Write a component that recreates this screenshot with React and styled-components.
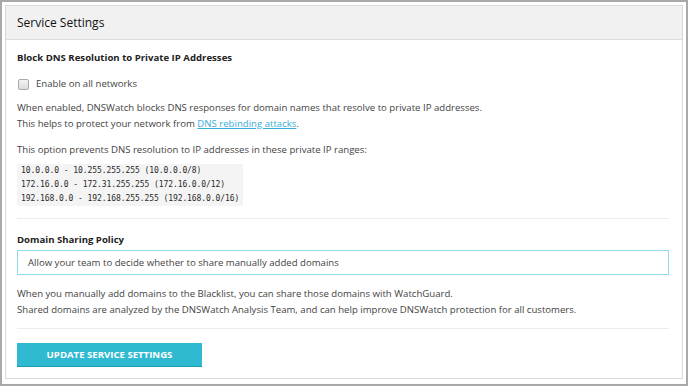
import React from 'react'
import styled, { createGlobalStyle } from 'styled-components'

const GlobalStyle = createGlobalStyle`
  html, body { margin: 0; padding: 0; background: #fff; }
  body { font-family: "Open Sans", "Liberation Sans", sans-serif; color: #333; }
`

const Frame = styled.div`
  width: 688px;
  height: 386px;
  box-sizing: border-box;
  border: 2px solid #a9a9a9;
  padding: 3px 3px 5px 3px;
`

const Panel = styled.section`
  height: 100%;
  box-sizing: border-box;
  border: 1px solid #d9d9d9;
  display: flex;
  flex-direction: column;
`

const Header = styled.header`
  height: 33px;
  background: #f1f1f1;
  border-bottom: 1px solid #dcdcdc;
  display: flex;
  align-items: center;
  padding: 0 11px;
  font-size: 12px;
  color: #111;
`

const Body = styled.div`
  padding: 10px 13px 0 11px;
  font-size: 9.6px;
`

const Title = styled.h3`
  margin: ${p => p.$top || 0}px 0 0;
  font-size: 9.6px;
  font-weight: 700;
  color: #222;
  line-height: 16px;
`

const CheckRow = styled.label`
  display: flex;
  align-items: center;
  gap: 7px;
  margin-top: 10px;
  line-height: 16px;
  color: #444;
`

const Box = styled.span`
  width: 9px;
  height: 9px;
  border: 1px solid #aaa;
  border-radius: 2px;
  background: linear-gradient(#f4f4f4, #dcdcdc);
  margin-left: 1px;
`

const Text = styled.p`
  margin: ${p => p.$top || 0}px 0 0;
  line-height: 16px;
  color: #444;
`

const Link = styled.a`
  color: #3aaed8;
  text-decoration: underline;
`

const Code = styled.pre`
  width: fit-content;
  margin: 6px 0 0;
  padding: 0 4px;
  background: #f4f4f4;
  font-family: "DejaVu Sans Mono", "Liberation Mono", monospace;
  font-size: 8px;
  letter-spacing: -0.07px;
  line-height: 14px;
  color: #2a2a2a;
`

const Divider = styled.hr`
  border: 0;
  border-top: 1px solid #ececec;
  margin: ${p => p.$top}px 0 0;
`

const Select = styled.div`
  margin-top: 2px;
  height: 23px;
  border: 1px solid #8fdbe9;
  display: flex;
  align-items: center;
  padding: 0 10px;
  color: #444;
`

const Button = styled.button`
  margin-top: 14px;
  width: 185px;
  height: 24px;
  border: 0;
  border-bottom: 1px solid #1c9bb1;
  background: #2fbad2;
  color: #fff;
  font-family: "Open Sans", "Liberation Sans", sans-serif;
  font-weight: 700;
  font-size: 9.6px;
  text-transform: uppercase;
`

export default function App() {
  return (
    <Frame>
      <GlobalStyle />
      <Panel>
        <Header>Service Settings</Header>
        <Body>
          <Title>Block DNS Resolution to Private IP Addresses</Title>
          <CheckRow><Box />Enable on all networks</CheckRow>
          <Text $top={8}>
            When enabled, DNSWatch blocks DNS responses for domain names that resolve to private IP addresses.<br />
            This helps to protect your network from <Link href="#">DNS rebinding attacks</Link>.
          </Text>
          <Text $top={10}>This option prevents DNS resolution to IP addresses in these private IP ranges:</Text>
          <Code>{`10.0.0.0 - 10.255.255.255 (10.0.0.0/8)
172.16.0.0 - 172.31.255.255 (172.16.0.0/12)
192.168.0.0 - 192.168.255.255 (192.168.0.0/16)`}</Code>
          <Divider $top={12} />
          <Title $top={13}>Domain Sharing Policy</Title>
          <Select>Allow your team to decide whether to share manually added domains</Select>
          <Text $top={11}>
            When you manually add domains to the Blacklist, you can share those domains with WatchGuard.<br />
            Shared domains are analyzed by the DNSWatch Analysis Team, and can help improve DNSWatch protection for all customers.
          </Text>
          <Divider $top={10} />
          <Button>Update Service Settings</Button>
        </Body>
      </Panel>
    </Frame>
  )
}
